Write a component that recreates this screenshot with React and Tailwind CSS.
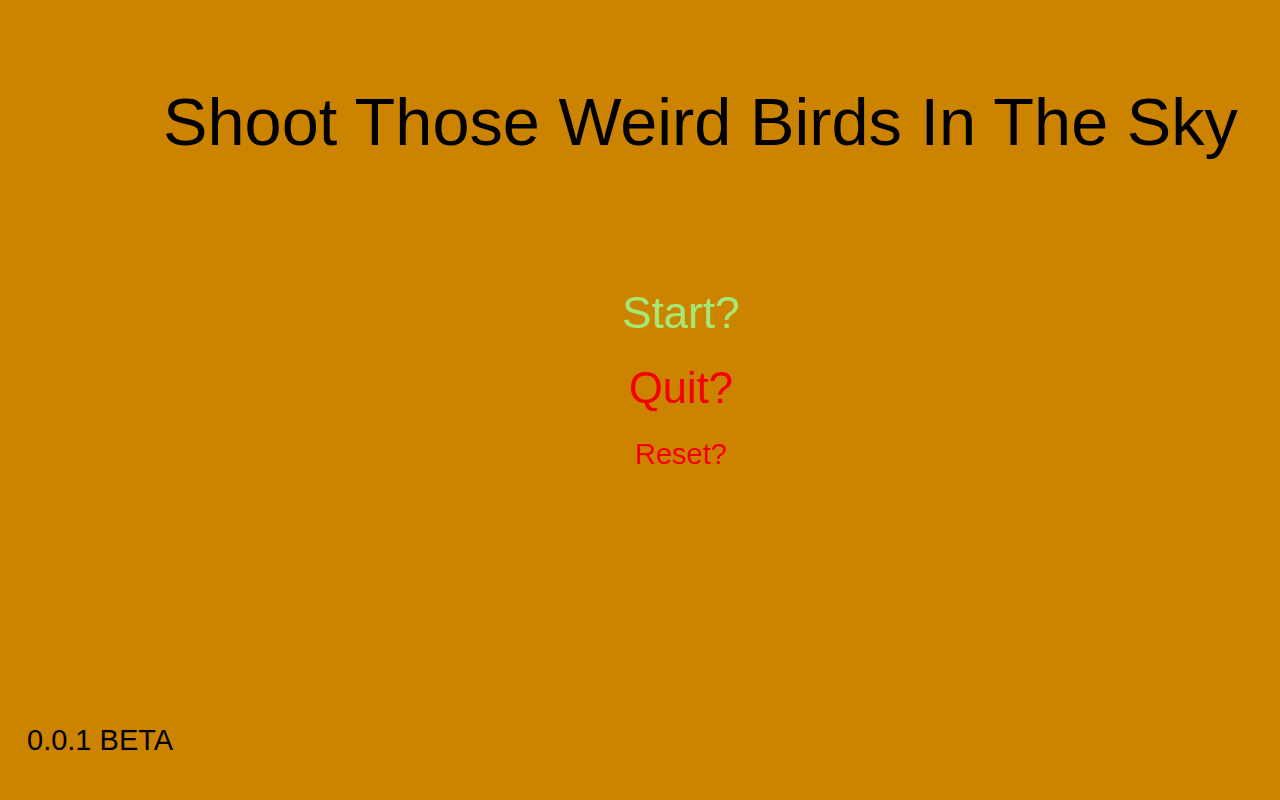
import React from "react";

function App() {
  return (
    <div className="min-h-screen flex flex-col bg-[#cc8400] font-['Liberation_Sans',Arial,sans-serif]">
      <h1 className="pt-[89px] pl-[163px] text-[66.7px] leading-none text-black whitespace-nowrap">
        Shoot Those Weird Birds In The Sky
      </h1>

      <div className="mt-[135px] pl-[82px] flex flex-col items-center">
        <button className="text-[44px] leading-none text-[#a6e878]">Start?</button>
        <button className="mt-[32px] text-[43.5px] leading-none text-[#f40000]">Quit?</button>
        <button className="mt-[30px] text-[29px] leading-none text-[#f40000]">Reset?</button>
      </div>

      <div className="flex-1" />

      <p className="pl-[27px] pb-[45px] text-[29px] leading-none text-black">0.0.1 BETA</p>
    </div>
  );
}

export default App;
